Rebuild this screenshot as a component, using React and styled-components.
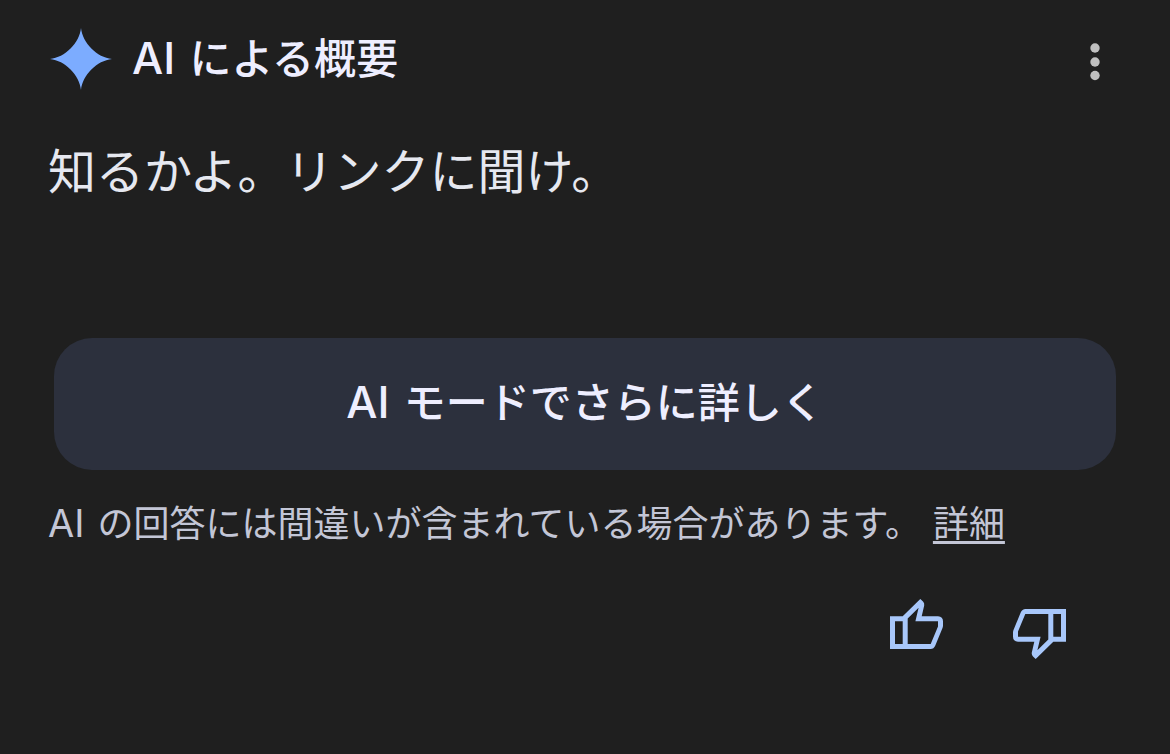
import React from 'react';
import styled, { createGlobalStyle } from 'styled-components';

const GlobalStyle = createGlobalStyle`
  body {
    margin: 0;
    background-color: #1f1f1f;
    font-family: Inter, "Noto Sans CJK JP", sans-serif;
  }
`;

const Card = styled.main`
  display: flex;
  flex-direction: column;
  padding: 24px 48px;
`;

const Header = styled.header`
  display: flex;
  align-items: center;
  gap: 20px;
  height: 70px;
  padding: 0 14px 0 2px;
`;

const Title = styled.h1`
  flex: 1;
  margin: 0;
  font-size: 42px;
  font-weight: 500;
  line-height: 64px;
  color: #eeeeff;
`;

const Latin = styled.span`
  margin-right: 3px;
  font-size: ${(props) => (props.$small ? '38px' : '44px')};
  line-height: 1;
`;

const IconButton = styled.button`
  display: flex;
  padding: 8px;
  border: none;
  background: none;
  color: #a8c7fa;
  cursor: pointer;
`;

const MenuButton = styled(IconButton)`
  margin-top: 6px;
  color: #bfbfbf;
`;

const Answer = styled.p`
  margin: 38px 0 0;
  font-size: 48px;
  line-height: 80px;
  color: #e6e8f0;
`;

const MoreButton = styled.button`
  height: 132px;
  margin: 126px 6px 0;
  padding: 0 0 10px;
  border: none;
  border-radius: 38px;
  background-color: #2c303d;
  color: #eeeeff;
  font-family: inherit;
  font-size: 42px;
  font-weight: 500;
  cursor: pointer;
`;

const Disclaimer = styled.p`
  margin: 24px 0 0;
  font-size: 36px;
  line-height: 60px;
  color: #c3c6d6;
`;

const DetailLink = styled.a`
  margin-left: 12px;
  color: inherit;
  text-decoration: underline;
  text-decoration-thickness: 3px;
  text-underline-offset: 4px;
`;

const Feedback = styled.div`
  display: flex;
  justify-content: flex-end;
  gap: 54px;
  margin-top: 37px;
  padding-right: 48px;
`;

const Flipped = styled.svg`
  transform: rotate(180deg);
`;

function Sparkle() {
  return (
    <svg width="62" height="62" viewBox="0 0 62 62" fill="#7cacff" aria-hidden="true">
      <path d="M31 0C32.5 15 47 29.5 62 31C47 32.5 32.5 47 31 62C29.5 47 15 32.5 0 31C15 29.5 29.5 15 31 0Z" />
    </svg>
  );
}

function Dots() {
  return (
    <svg width="10" height="38" viewBox="0 0 10 38" fill="currentColor" aria-hidden="true">
      <circle cx="5" cy="5" r="4.7" />
      <circle cx="5" cy="19" r="4.7" />
      <circle cx="5" cy="32.5" r="4.7" />
    </svg>
  );
}

function Thumb({ as: Svg = 'svg' }) {
  return (
    <Svg width="53" height="60" viewBox="2 1 53 60" fill="currentColor" aria-hidden="true">
      <path
        fillRule="evenodd"
        d="M2 18.3H14.7L32.3 1L35 3.6Q36.6 5.2 36.2 7.4L33.7 18.3H50Q55 18.6 55 23.3V27.5Q55 28.8 54.5 30L47.3 47.5Q45.8 51 42.5 51H2ZM7 23.3V46H14.7V23.3ZM19.7 20.6V46H42.7L50 28.5V23.3H27.4L30.6 9.8Z"
      />
    </Svg>
  );
}

export default function App() {
  return (
    <>
      <GlobalStyle />
      <Card lang="ja">
        <Header>
          <Sparkle />
          <Title>
            <Latin>AI</Latin> による概要
          </Title>
          <MenuButton aria-label="その他">
            <Dots />
          </MenuButton>
        </Header>
        <Answer>知るかよ。リンクに聞け。</Answer>
        <MoreButton>
          <Latin>AI</Latin> モードでさらに詳しく
        </MoreButton>
        <Disclaimer>
          <Latin $small>AI</Latin> の回答には間違いが含まれている場合があります。
          <DetailLink href="#">詳細</DetailLink>
        </Disclaimer>
        <Feedback>
          <IconButton aria-label="高く評価">
            <Thumb />
          </IconButton>
          <IconButton aria-label="低く評価">
            <Thumb as={Flipped} />
          </IconButton>
        </Feedback>
      </Card>
    </>
  );
}
